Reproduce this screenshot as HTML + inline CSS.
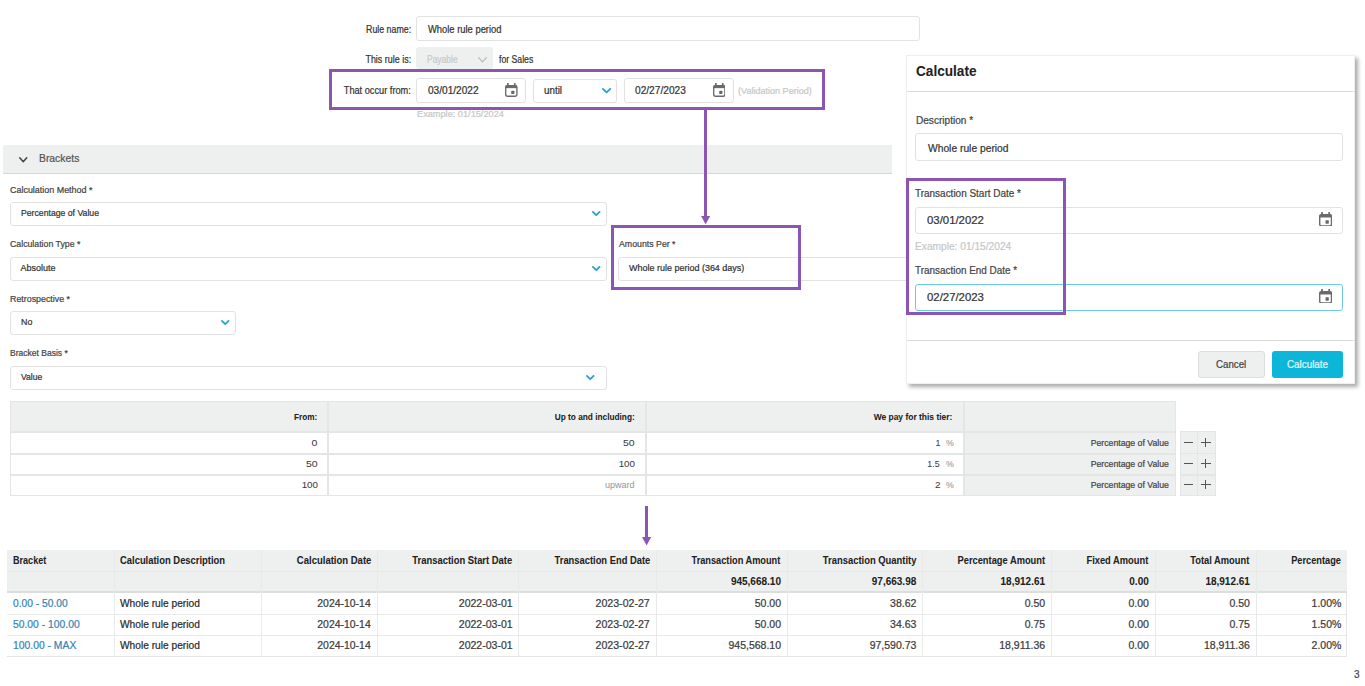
<!DOCTYPE html>
<html><head><meta charset="utf-8"><title>Brackets</title><style>
html,body{margin:0;padding:0;background:#fff;}
body{width:1365px;height:686px;overflow:hidden;position:relative}
.r{position:absolute;box-sizing:border-box}
.t{position:absolute;white-space:nowrap;font-family:"Liberation Sans",sans-serif;-webkit-text-stroke:0.22px currentColor}
.b{font-weight:bold;-webkit-text-stroke:0.05px currentColor}
.l{transform-origin:0 0}.g{transform-origin:100% 0;text-align:right}
</style></head><body>
<div class="t g" style="right:954.21px;top:24.64px;font-size:10px;line-height:10px;color:#333;transform:scaleX(0.882);">Rule name:</div>
<div class="r" style="left:416px;top:16px;width:504px;height:25px;border:1px solid #e2e2e2;border-radius:3px;background:#fff;"></div>
<div class="t l" style="left:427.7px;top:24.64px;font-size:10px;line-height:10px;color:#333;transform:scaleX(0.938);">Whole rule period</div>
<div class="t g" style="right:954.2px;top:55.33px;font-size:10px;line-height:10px;color:#333;transform:scaleX(0.894);">This rule is:</div>
<div class="r" style="left:416px;top:47px;width:77px;height:22px;background:#eef0f0;border-radius:3px;"></div>
<div class="t l" style="left:427px;top:55.33px;font-size:10px;line-height:10px;color:#c6c9c9;transform:scaleX(0.848);">Payable</div>
<svg style="position:absolute;left:476.70px;top:55.75px" width="11.00" height="7.50"><polyline points="1.65,1.65 5.50,5.85 9.35,1.65" fill="none" stroke="#b9bcbc" stroke-width="1.3" stroke-linecap="round" stroke-linejoin="round"/></svg>
<div class="t l" style="left:499px;top:55.33px;font-size:10px;line-height:10px;color:#333;transform:scaleX(0.867);">for Sales</div>
<div class="t g" style="right:954.48px;top:86.23px;font-size:10px;line-height:10px;color:#333;transform:scaleX(0.921);">That occur from:</div>
<div class="r" style="left:416px;top:78px;width:110px;height:25px;border:1px solid #e2e2e2;border-radius:3px;background:#fff;"></div>
<div class="t l" style="left:427.7px;top:86.13px;font-size:10px;line-height:10px;color:#333;transform:scaleX(1.010);">03/01/2022</div>
<svg style="position:absolute;left:505.3px;top:82.7px" width="12.6" height="13.9" viewBox="0 0 13 14" preserveAspectRatio="none"><rect x="0.7" y="2.7" width="11.6" height="10.6" rx="1.7" fill="none" stroke="#6a6a6a" stroke-width="1.4"/><rect x="0.7" y="2.4" width="11.6" height="2.8" fill="#6a6a6a"/><rect x="2.1" y="0" width="1.7" height="3" fill="#6a6a6a"/><rect x="9.2" y="0" width="1.7" height="3" fill="#6a6a6a"/><rect x="6.4" y="7.7" width="3.3" height="3.3" rx="0.5" fill="#6a6a6a"/></svg>
<div class="r" style="left:533px;top:79px;width:84px;height:24px;border:1px solid #e2e2e2;border-radius:3px;background:#fff;"></div>
<div class="t l" style="left:544px;top:86.13px;font-size:10px;line-height:10px;color:#333;transform:scaleX(0.982);">until</div>
<svg style="position:absolute;left:601.00px;top:87.05px" width="11.20" height="7.30"><polyline points="1.90,1.90 5.60,5.40 9.30,1.90" fill="none" stroke="#22a4c9" stroke-width="1.8" stroke-linecap="round" stroke-linejoin="round"/></svg>
<div class="r" style="left:624px;top:78px;width:110px;height:25px;border:1px solid #e2e2e2;border-radius:3px;background:#fff;"></div>
<div class="t l" style="left:635px;top:86.13px;font-size:10px;line-height:10px;color:#333;transform:scaleX(1.016);">02/27/2023</div>
<svg style="position:absolute;left:712.6px;top:82.9px" width="12.6" height="13.9" viewBox="0 0 13 14" preserveAspectRatio="none"><rect x="0.7" y="2.7" width="11.6" height="10.6" rx="1.7" fill="none" stroke="#6a6a6a" stroke-width="1.4"/><rect x="0.7" y="2.4" width="11.6" height="2.8" fill="#6a6a6a"/><rect x="2.1" y="0" width="1.7" height="3" fill="#6a6a6a"/><rect x="9.2" y="0" width="1.7" height="3" fill="#6a6a6a"/><rect x="6.4" y="7.7" width="3.3" height="3.3" rx="0.5" fill="#6a6a6a"/></svg>
<div class="t l" style="left:738.2px;top:86.98px;font-size:9px;line-height:9px;color:#c6c8c8;transform:scaleX(1.006);">(Validation Period)</div>
<div class="t l" style="left:416.7px;top:109.78px;font-size:9px;line-height:9px;color:#c6c8c8;transform:scaleX(1.021);">Example: 01/15/2024</div>
<div class="r" style="left:3px;top:145px;width:889px;height:29px;background:#eef0f0;border-bottom:1.5px solid #d4d6d6;box-sizing:border-box;"></div>
<svg style="position:absolute;left:18.05px;top:156.05px" width="10.50" height="7.50"><polyline points="1.75,1.75 5.25,5.75 8.75,1.75" fill="none" stroke="#444" stroke-width="1.5" stroke-linecap="round" stroke-linejoin="round"/></svg>
<div class="t l" style="left:38.6px;top:152.69px;font-size:11px;line-height:11px;color:#555;transform:scaleX(0.942);">Brackets</div>
<div class="t l" style="left:10px;top:185.88px;font-size:9px;line-height:9px;color:#444;transform:scaleX(0.993);">Calculation Method *</div>
<div class="r" style="left:10px;top:202px;width:597px;height:24px;border:1px solid #e2e2e2;border-radius:3px;background:#fff;"></div>
<div class="t l" style="left:20.5px;top:209.38px;font-size:9px;line-height:9px;color:#333;transform:scaleX(0.964);">Percentage of Value</div>
<svg style="position:absolute;left:590.65px;top:210.10px" width="10.50" height="7.00"><polyline points="1.90,1.90 5.25,5.10 8.60,1.90" fill="none" stroke="#22a4c9" stroke-width="1.8" stroke-linecap="round" stroke-linejoin="round"/></svg>
<div class="t l" style="left:10px;top:240.38px;font-size:9px;line-height:9px;color:#444;transform:scaleX(0.972);">Calculation Type *</div>
<div class="r" style="left:10px;top:257px;width:597px;height:24px;border:1px solid #e2e2e2;border-radius:3px;background:#fff;"></div>
<div class="t l" style="left:20.5px;top:263.58px;font-size:9px;line-height:9px;color:#333;">Absolute</div>
<svg style="position:absolute;left:590.65px;top:264.90px" width="10.50" height="7.00"><polyline points="1.90,1.90 5.25,5.10 8.60,1.90" fill="none" stroke="#22a4c9" stroke-width="1.8" stroke-linecap="round" stroke-linejoin="round"/></svg>
<div class="t l" style="left:618.6px;top:239.88px;font-size:9px;line-height:9px;color:#444;transform:scaleX(0.974);">Amounts Per *</div>
<div class="r" style="left:618px;top:257px;width:300px;height:24px;border:1px solid #e2e2e2;border-radius:3px;background:#fff;"></div>
<div class="t l" style="left:629.3px;top:263.78px;font-size:9px;line-height:9px;color:#333;transform:scaleX(0.998);">Whole rule period (364 days)</div>
<div class="t l" style="left:10px;top:294.68px;font-size:9px;line-height:9px;color:#444;transform:scaleX(0.983);">Retrospective *</div>
<div class="r" style="left:10px;top:311px;width:226px;height:24px;border:1px solid #e2e2e2;border-radius:3px;background:#fff;"></div>
<div class="t l" style="left:20.5px;top:317.88px;font-size:9px;line-height:9px;color:#333;transform:scaleX(0.983);">No</div>
<svg style="position:absolute;left:220.45px;top:319.30px" width="10.50" height="7.00"><polyline points="1.90,1.90 5.25,5.10 8.60,1.90" fill="none" stroke="#22a4c9" stroke-width="1.8" stroke-linecap="round" stroke-linejoin="round"/></svg>
<div class="t l" style="left:10px;top:349.28px;font-size:9px;line-height:9px;color:#444;transform:scaleX(0.946);">Bracket Basis *</div>
<div class="r" style="left:10px;top:366px;width:597px;height:24px;border:1px solid #e2e2e2;border-radius:3px;background:#fff;"></div>
<div class="t l" style="left:20.5px;top:373.38px;font-size:9px;line-height:9px;color:#333;transform:scaleX(0.953);">Value</div>
<svg style="position:absolute;left:585.25px;top:373.90px" width="10.50" height="7.00"><polyline points="1.90,1.90 5.25,5.10 8.60,1.90" fill="none" stroke="#22a4c9" stroke-width="1.8" stroke-linecap="round" stroke-linejoin="round"/></svg>
<div class="r" style="left:10px;top:401px;width:1166px;height:95px;border:1px solid #e4e6e6;background:#fff;box-sizing:border-box;"></div>
<div class="r" style="left:11px;top:402px;width:1164px;height:29px;background:#eef0f0;"></div>
<div class="r" style="left:964px;top:402px;width:211px;height:93px;background:#eef0f0;"></div>
<div class="r" style="left:10px;top:431px;width:1166px;height:2px;background:#e4e6e6;"></div>
<div class="r" style="left:10px;top:452.5px;width:1166px;height:2px;background:#e4e6e6;"></div>
<div class="r" style="left:10px;top:474px;width:1166px;height:2px;background:#e4e6e6;"></div>
<div class="r" style="left:327px;top:401px;width:2px;height:95px;background:#e4e6e6;"></div>
<div class="r" style="left:645px;top:401px;width:2px;height:95px;background:#e4e6e6;"></div>
<div class="r" style="left:962.5px;top:401px;width:2px;height:95px;background:#e4e6e6;"></div>
<div class="t g b" style="right:1047.83px;top:412.47px;font-size:9.6px;line-height:9.6px;color:#222;transform:scaleX(0.852);">From:</div>
<div class="t g b" style="right:730.43px;top:412.47px;font-size:9.6px;line-height:9.6px;color:#222;transform:scaleX(0.862);">Up to and including:</div>
<div class="t g b" style="right:412.83px;top:412.47px;font-size:9.6px;line-height:9.6px;color:#222;transform:scaleX(0.881);">We pay for this tier:</div>
<div class="t g" style="right:1047.33px;top:438.27px;font-size:9.6px;line-height:9.6px;color:#3a3a3a;transform:scaleX(1.100);-webkit-text-stroke-width:0.05px;">0</div>
<div class="t g" style="right:730.23px;top:438.27px;font-size:9.6px;line-height:9.6px;color:#3a3a3a;transform:scaleX(1.093);-webkit-text-stroke-width:0.05px;">50</div>
<div class="t g" style="right:424.2px;top:438.1px;font-size:9.8px;line-height:9.8px;color:#3a3a3a;transform:scaleX(0.900);-webkit-text-stroke-width:0.05px;">1</div>
<div class="t l" style="left:946px;top:438.1px;font-size:9.8px;line-height:9.8px;color:#aaa;transform:scaleX(0.900);">%</div>
<div class="t g" style="right:196.09px;top:438.78px;font-size:9px;line-height:9px;color:#444;transform:scaleX(0.967);">Percentage of Value</div>
<div class="t g" style="right:1047.33px;top:459.07px;font-size:9.6px;line-height:9.6px;color:#3a3a3a;transform:scaleX(1.093);-webkit-text-stroke-width:0.05px;">50</div>
<div class="t g" style="right:730.26px;top:459.07px;font-size:9.6px;line-height:9.6px;color:#3a3a3a;transform:scaleX(1.021);-webkit-text-stroke-width:0.05px;">100</div>
<div class="t g" style="right:425.1px;top:458.9px;font-size:9.8px;line-height:9.8px;color:#3a3a3a;transform:scaleX(0.900);-webkit-text-stroke-width:0.05px;">1.5</div>
<div class="t l" style="left:946px;top:458.9px;font-size:9.8px;line-height:9.8px;color:#aaa;transform:scaleX(0.900);">%</div>
<div class="t g" style="right:196.09px;top:459.58px;font-size:9px;line-height:9px;color:#444;transform:scaleX(0.967);">Percentage of Value</div>
<div class="t g" style="right:1047.36px;top:480.07px;font-size:9.6px;line-height:9.6px;color:#3a3a3a;transform:scaleX(1.021);-webkit-text-stroke-width:0.05px;">100</div>
<div class="t g" style="right:730.59px;top:480.58px;font-size:9px;line-height:9px;color:#999;transform:scaleX(1.003);-webkit-text-stroke-width:0.05px;">upward</div>
<div class="t g" style="right:424.14px;top:479.9px;font-size:9.8px;line-height:9.8px;color:#3a3a3a;transform:scaleX(1.020);-webkit-text-stroke-width:0.05px;">2</div>
<div class="t l" style="left:946px;top:479.9px;font-size:9.8px;line-height:9.8px;color:#aaa;transform:scaleX(0.900);">%</div>
<div class="t g" style="right:196.09px;top:480.58px;font-size:9px;line-height:9px;color:#444;transform:scaleX(0.967);">Percentage of Value</div>
<div class="r" style="left:1179.5px;top:431px;width:36px;height:65px;background:#eef0f0;border:1px solid #e4e6e6;box-sizing:border-box;"></div>
<div class="r" style="left:1196.8px;top:431px;width:1px;height:65px;background:#e4e6e6;"></div>
<div class="r" style="left:1179.5px;top:452.5px;width:36px;height:1.5px;background:#e4e6e6;"></div>
<div class="r" style="left:1179.5px;top:474px;width:36px;height:1.5px;background:#e4e6e6;"></div>
<div class="r" style="left:1184px;top:441.8px;width:9px;height:1.3px;background:#555;"></div>
<div class="r" style="left:1201px;top:441.8px;width:9.5px;height:1.2px;background:#555;"></div>
<div class="r" style="left:1205.2px;top:437.8px;width:1.2px;height:9.5px;background:#555;"></div>
<div class="r" style="left:1184px;top:462.6px;width:9px;height:1.3px;background:#555;"></div>
<div class="r" style="left:1201px;top:462.6px;width:9.5px;height:1.2px;background:#555;"></div>
<div class="r" style="left:1205.2px;top:458.6px;width:1.2px;height:9.5px;background:#555;"></div>
<div class="r" style="left:1184px;top:483.6px;width:9px;height:1.3px;background:#555;"></div>
<div class="r" style="left:1201px;top:483.6px;width:9.5px;height:1.2px;background:#555;"></div>
<div class="r" style="left:1205.2px;top:479.6px;width:1.2px;height:9.5px;background:#555;"></div>
<div class="r" style="left:704px;top:107px;width:3px;height:110px;background:#8c55b4;"></div>
<svg style="position:absolute;left:700px;top:215.3px" width="12" height="10"><polygon points="1,1 10.2,1 5.6,9.2" fill="#8c55b4"/></svg>
<div class="r" style="left:645.2px;top:505.5px;width:3px;height:32px;background:#8c55b4;"></div>
<svg style="position:absolute;left:641px;top:535.8px" width="12" height="10"><polygon points="1,1 10.2,1 5.6,9.5" fill="#8c55b4"/></svg>
<div class="r" style="left:329px;top:69px;width:496px;height:41px;border:3px solid #8c55b4;box-sizing:border-box;"></div>
<div class="r" style="left:611px;top:225px;width:190px;height:65px;border:3px solid #8c55b4;box-sizing:border-box;"></div>
<div class="r" style="left:7px;top:550px;width:1340px;height:106.5px;background:#fff;border-right:1px solid #e4e6e6;border-bottom:1.5px solid #e4e6e6;box-sizing:border-box;"></div>
<div class="r" style="left:7px;top:550px;width:1340px;height:42.5px;background:#eef0f0;"></div>
<div class="r" style="left:7px;top:570.8px;width:1340px;height:1px;background:#e6e8e8;"></div>
<div class="r" style="left:7px;top:591px;width:1340px;height:2px;background:#dcdede;"></div>
<div class="r" style="left:7px;top:614px;width:1340px;height:1.2px;background:#e8eaea;"></div>
<div class="r" style="left:7px;top:635px;width:1340px;height:1.2px;background:#e8eaea;"></div>
<div class="r" style="left:114px;top:550px;width:1.1px;height:106.5px;background:#e8eaea;"></div>
<div class="r" style="left:260.5px;top:550px;width:1.1px;height:106.5px;background:#e8eaea;"></div>
<div class="r" style="left:376.8px;top:550px;width:1.1px;height:106.5px;background:#e8eaea;"></div>
<div class="r" style="left:518px;top:550px;width:1.1px;height:106.5px;background:#e8eaea;"></div>
<div class="r" style="left:655.8px;top:550px;width:1.1px;height:106.5px;background:#e8eaea;"></div>
<div class="r" style="left:786.7px;top:550px;width:1.1px;height:106.5px;background:#e8eaea;"></div>
<div class="r" style="left:922px;top:550px;width:1.1px;height:106.5px;background:#e8eaea;"></div>
<div class="r" style="left:1050.8px;top:550px;width:1.1px;height:106.5px;background:#e8eaea;"></div>
<div class="r" style="left:1154.5px;top:550px;width:1.1px;height:106.5px;background:#e8eaea;"></div>
<div class="r" style="left:1255.6px;top:550px;width:1.1px;height:106.5px;background:#e8eaea;"></div>
<div class="t l b" style="left:12.8px;top:556.03px;font-size:10px;line-height:10px;color:#222;transform:scaleX(0.907);">Bracket</div>
<div class="t l b" style="left:120.3px;top:556.03px;font-size:10px;line-height:10px;color:#222;transform:scaleX(0.941);">Calculation Description</div>
<div class="t g b" style="right:994.12px;top:556.03px;font-size:10px;line-height:10px;color:#222;transform:scaleX(0.951);">Calculation Date</div>
<div class="t g b" style="right:852.91px;top:556.03px;font-size:10px;line-height:10px;color:#222;transform:scaleX(0.940);">Transaction Start Date</div>
<div class="t g b" style="right:715.11px;top:556.03px;font-size:10px;line-height:10px;color:#222;transform:scaleX(0.936);">Transaction End Date</div>
<div class="t g b" style="right:584.42px;top:556.03px;font-size:10px;line-height:10px;color:#222;transform:scaleX(0.922);">Transaction Amount</div>
<div class="t g b" style="right:448.91px;top:556.03px;font-size:10px;line-height:10px;color:#222;transform:scaleX(0.941);">Transaction Quantity</div>
<div class="t g b" style="right:320.32px;top:556.03px;font-size:10px;line-height:10px;color:#222;transform:scaleX(0.931);">Percentage Amount</div>
<div class="t g b" style="right:216.62px;top:556.03px;font-size:10px;line-height:10px;color:#222;transform:scaleX(0.933);">Fixed Amount</div>
<div class="t g b" style="right:115.53px;top:556.03px;font-size:10px;line-height:10px;color:#222;transform:scaleX(0.934);">Total Amount</div>
<div class="t g b" style="right:24.4px;top:556.03px;font-size:10px;line-height:10px;color:#222;transform:scaleX(0.922);">Percentage</div>
<div class="t g b" style="right:584.04px;top:577.03px;font-size:10px;line-height:10px;color:#222;">945,668.10</div>
<div class="t g b" style="right:448.74px;top:577.03px;font-size:10px;line-height:10px;color:#222;">97,663.98</div>
<div class="t g b" style="right:319.94px;top:577.03px;font-size:10px;line-height:10px;color:#222;">18,912.61</div>
<div class="t g b" style="right:216.24px;top:577.03px;font-size:10px;line-height:10px;color:#222;">0.00</div>
<div class="t g b" style="right:115.14px;top:577.03px;font-size:10px;line-height:10px;color:#222;">18,912.61</div>
<div class="t l" style="left:12.5px;top:598.31px;font-size:10.5px;line-height:10.5px;color:#3584b8;transform:scaleX(0.977);">0.00 - 50.00</div>
<div class="t l" style="left:120.3px;top:598.31px;font-size:10.5px;line-height:10.5px;color:#2a2a2a;transform:scaleX(0.970);">Whole rule period</div>
<div class="t g" style="right:993.86px;top:598.31px;font-size:10.5px;line-height:10.5px;color:#3a3a3a;transform:scaleX(0.995);">2024-10-14</div>
<div class="t g" style="right:852.66px;top:598.31px;font-size:10.5px;line-height:10.5px;color:#3a3a3a;transform:scaleX(1.004);">2022-03-01</div>
<div class="t g" style="right:714.86px;top:598.31px;font-size:10.5px;line-height:10.5px;color:#3a3a3a;transform:scaleX(1.008);">2023-02-27</div>
<div class="t g" style="right:583.96px;top:598.31px;font-size:10.5px;line-height:10.5px;color:#3a3a3a;">50.00</div>
<div class="t g" style="right:448.66px;top:598.31px;font-size:10.5px;line-height:10.5px;color:#3a3a3a;">38.62</div>
<div class="t g" style="right:319.86px;top:598.31px;font-size:10.5px;line-height:10.5px;color:#3a3a3a;">0.50</div>
<div class="t g" style="right:216.16px;top:598.31px;font-size:10.5px;line-height:10.5px;color:#3a3a3a;">0.00</div>
<div class="t g" style="right:115.06px;top:598.31px;font-size:10.5px;line-height:10.5px;color:#3a3a3a;">0.50</div>
<div class="t g" style="right:23.66px;top:598.31px;font-size:10.5px;line-height:10.5px;color:#3a3a3a;">1.00%</div>
<div class="t l" style="left:12.5px;top:619.31px;font-size:10.5px;line-height:10.5px;color:#3584b8;transform:scaleX(0.984);">50.00 - 100.00</div>
<div class="t l" style="left:120.3px;top:619.31px;font-size:10.5px;line-height:10.5px;color:#2a2a2a;transform:scaleX(0.970);">Whole rule period</div>
<div class="t g" style="right:993.86px;top:619.31px;font-size:10.5px;line-height:10.5px;color:#3a3a3a;transform:scaleX(0.995);">2024-10-14</div>
<div class="t g" style="right:852.66px;top:619.31px;font-size:10.5px;line-height:10.5px;color:#3a3a3a;transform:scaleX(1.004);">2022-03-01</div>
<div class="t g" style="right:714.86px;top:619.31px;font-size:10.5px;line-height:10.5px;color:#3a3a3a;transform:scaleX(1.008);">2023-02-27</div>
<div class="t g" style="right:583.96px;top:619.31px;font-size:10.5px;line-height:10.5px;color:#3a3a3a;">50.00</div>
<div class="t g" style="right:448.66px;top:619.31px;font-size:10.5px;line-height:10.5px;color:#3a3a3a;">34.63</div>
<div class="t g" style="right:319.86px;top:619.31px;font-size:10.5px;line-height:10.5px;color:#3a3a3a;">0.75</div>
<div class="t g" style="right:216.16px;top:619.31px;font-size:10.5px;line-height:10.5px;color:#3a3a3a;">0.00</div>
<div class="t g" style="right:115.06px;top:619.31px;font-size:10.5px;line-height:10.5px;color:#3a3a3a;">0.75</div>
<div class="t g" style="right:23.66px;top:619.31px;font-size:10.5px;line-height:10.5px;color:#3a3a3a;">1.50%</div>
<div class="t l" style="left:12.5px;top:640.31px;font-size:10.5px;line-height:10.5px;color:#3584b8;transform:scaleX(0.986);">100.00 - MAX</div>
<div class="t l" style="left:120.3px;top:640.31px;font-size:10.5px;line-height:10.5px;color:#2a2a2a;transform:scaleX(0.970);">Whole rule period</div>
<div class="t g" style="right:993.86px;top:640.31px;font-size:10.5px;line-height:10.5px;color:#3a3a3a;transform:scaleX(0.995);">2024-10-14</div>
<div class="t g" style="right:852.66px;top:640.31px;font-size:10.5px;line-height:10.5px;color:#3a3a3a;transform:scaleX(1.004);">2022-03-01</div>
<div class="t g" style="right:714.86px;top:640.31px;font-size:10.5px;line-height:10.5px;color:#3a3a3a;transform:scaleX(1.008);">2023-02-27</div>
<div class="t g" style="right:583.96px;top:640.31px;font-size:10.5px;line-height:10.5px;color:#3a3a3a;">945,568.10</div>
<div class="t g" style="right:448.66px;top:640.31px;font-size:10.5px;line-height:10.5px;color:#3a3a3a;">97,590.73</div>
<div class="t g" style="right:319.86px;top:640.31px;font-size:10.5px;line-height:10.5px;color:#3a3a3a;">18,911.36</div>
<div class="t g" style="right:216.16px;top:640.31px;font-size:10.5px;line-height:10.5px;color:#3a3a3a;">0.00</div>
<div class="t g" style="right:115.06px;top:640.31px;font-size:10.5px;line-height:10.5px;color:#3a3a3a;">18,911.36</div>
<div class="t g" style="right:23.66px;top:640.31px;font-size:10.5px;line-height:10.5px;color:#3a3a3a;">2.00%</div>
<div class="t l" style="left:1354px;top:669.53px;font-size:10px;line-height:10px;color:#444;">3</div>
<div class="r" style="left:906.2px;top:54.5px;width:448.8px;height:329px;background:#fff;border:1px solid #efefef;box-sizing:border-box;box-shadow:3px 3px 4px rgba(0,0,0,0.33);"></div>
<div class="r" style="left:907px;top:90.5px;width:447.5px;height:1.5px;background:#dcdcdc;"></div>
<div class="r" style="left:907px;top:339.5px;width:447.5px;height:1.5px;background:#dcdcdc;"></div>
<div class="t l b" style="left:915.6px;top:63.75px;font-size:14px;line-height:14px;color:#222;transform:scaleX(0.972);">Calculate</div>
<div class="t l" style="left:915.6px;top:115.94px;font-size:10px;line-height:10px;color:#444;transform:scaleX(1.007);">Description *</div>
<div class="r" style="left:915px;top:133px;width:428px;height:27.5px;border:1px solid #e2e2e2;border-radius:3px;background:#fff;"></div>
<div class="t l" style="left:928.2px;top:142.99px;font-size:11px;line-height:11px;color:#333;transform:scaleX(0.934);">Whole rule period</div>
<div class="t l" style="left:915.3px;top:188.84px;font-size:10px;line-height:10px;color:#444;transform:scaleX(0.996);">Transaction Start Date *</div>
<div class="r" style="left:915px;top:207px;width:428px;height:26.5px;border:1px solid #e2e2e2;border-radius:3px;background:#fff;"></div>
<div class="t l" style="left:927.4px;top:215.49px;font-size:11px;line-height:11px;color:#333;transform:scaleX(1.034);">03/01/2022</div>
<svg style="position:absolute;left:1318.7px;top:211.6px" width="13.2" height="14.8" viewBox="0 0 13 14" preserveAspectRatio="none"><rect x="0.7" y="2.7" width="11.6" height="10.6" rx="1.7" fill="none" stroke="#6a6a6a" stroke-width="1.4"/><rect x="0.7" y="2.4" width="11.6" height="2.8" fill="#6a6a6a"/><rect x="2.1" y="0" width="1.7" height="3" fill="#6a6a6a"/><rect x="9.2" y="0" width="1.7" height="3" fill="#6a6a6a"/><rect x="6.4" y="7.7" width="3.3" height="3.3" rx="0.5" fill="#6a6a6a"/></svg>
<div class="t l" style="left:915.3px;top:241.94px;font-size:10px;line-height:10px;color:#c6c8c8;transform:scaleX(1.018);">Example: 01/15/2024</div>
<div class="t l" style="left:915.3px;top:265.94px;font-size:10px;line-height:10px;color:#444;transform:scaleX(0.991);">Transaction End Date *</div>
<div class="r" style="left:915px;top:284px;width:428px;height:26.5px;border:1px solid #e2e2e2;border-radius:3px;background:#fff;border:1.5px solid #6ccbe2;"></div>
<div class="t l" style="left:927.4px;top:292.49px;font-size:11px;line-height:11px;color:#333;transform:scaleX(1.034);">02/27/2023</div>
<svg style="position:absolute;left:1318.7px;top:288.6px" width="13.2" height="14.8" viewBox="0 0 13 14" preserveAspectRatio="none"><rect x="0.7" y="2.7" width="11.6" height="10.6" rx="1.7" fill="none" stroke="#6a6a6a" stroke-width="1.4"/><rect x="0.7" y="2.4" width="11.6" height="2.8" fill="#6a6a6a"/><rect x="2.1" y="0" width="1.7" height="3" fill="#6a6a6a"/><rect x="9.2" y="0" width="1.7" height="3" fill="#6a6a6a"/><rect x="6.4" y="7.7" width="3.3" height="3.3" rx="0.5" fill="#6a6a6a"/></svg>
<div class="r" style="left:1197.5px;top:351px;width:67.5px;height:27px;background:#eef0f0;border:1px solid #dcdede;border-radius:3px;box-sizing:border-box;"></div>
<div class="t l" style="left:1216.3px;top:359.94px;font-size:10px;line-height:10px;color:#444;transform:scaleX(0.971);">Cancel</div>
<div class="r" style="left:1272.2px;top:351px;width:71px;height:27px;background:#0db5d8;border-radius:3px;"></div>
<div class="t l" style="left:1286.6px;top:359.94px;font-size:10px;line-height:10px;color:#e2f5fa;transform:scaleX(0.985);">Calculate</div>
<div class="r" style="left:906px;top:178px;width:160px;height:137px;border:3px solid #8c55b4;box-sizing:border-box;"></div>
</body></html>
